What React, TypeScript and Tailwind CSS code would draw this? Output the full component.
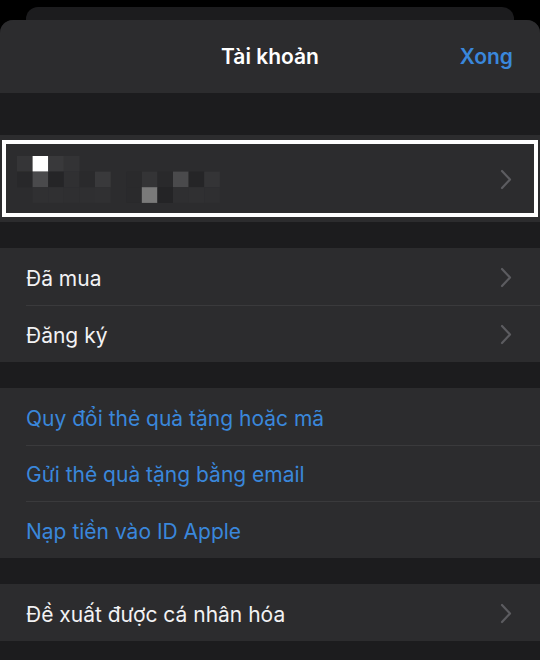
import React from 'react';

const blue = 'text-[#3a87db]';

const Chevron: React.FC = () => (
  <svg width="12" height="21" viewBox="0 0 12 21" className="shrink-0 mt-[2px]">
    <path d="M2 2 L10 10.5 L2 19" fill="none" stroke="#5c5c60" strokeWidth="2.2" strokeLinecap="round" strokeLinejoin="round" />
  </svg>
);

// pixelated (blurred) account name, cells of ~15.5px
const cells: { x: number; y: number; c: string }[] = [
  { x: 0, y: 0, c: '#353537' },
  { x: 1, y: 0, c: '#ffffff' },
  { x: 2, y: 0, c: '#39393b' },
  { x: 3, y: 0, c: '#333335' },
  { x: 0, y: 1, c: '#28282a' },
  { x: 1, y: 1, c: '#4a4a4c' },
  { x: 2, y: 1, c: '#252527' },
  { x: 3, y: 1, c: '#303032' },
  { x: 4, y: 1, c: '#2a2a2c' },
  { x: 5, y: 1, c: '#39393b' },
  { x: 7, y: 1, c: '#2a2a2c' },
  { x: 8, y: 1, c: '#343436' },
  { x: 9, y: 1, c: '#29292b' },
  { x: 10, y: 1, c: '#4a4a4c' },
  { x: 11, y: 1, c: '#252527' },
  { x: 12, y: 1, c: '#343436' },
  { x: 1, y: 2, c: '#303032' },
  { x: 2, y: 2, c: '#303032' },
  { x: 3, y: 2, c: '#2f2f31' },
  { x: 4, y: 2, c: '#2f2f31' },
  { x: 5, y: 2, c: '#303032' },
  { x: 7, y: 2, c: '#2a2a2c' },
  { x: 8, y: 2, c: '#7a7a7a' },
  { x: 9, y: 2, c: '#242426' },
  { x: 10, y: 2, c: '#2f2f31' },
  { x: 11, y: 2, c: '#303032' },
  { x: 12, y: 2, c: '#2f2f31' },
];

const Row: React.FC<{ label: string; link?: boolean; chevron?: boolean; sep?: boolean; h?: string }> = ({
  label,
  link,
  chevron,
  sep,
  h = 'h-[57px]',
}) => (
  <div className={`relative ${h} flex items-center pl-[26px] pr-[28px]`}>
    {sep && <div className="absolute top-0 left-[26px] right-0 h-px bg-[#3a3a3c]" />}
    <span className={`flex-1 pt-[4px] text-[21px] ${link ? blue : 'text-[#f2f2f4]'}`}>{label}</span>
    {chevron && <Chevron />}
  </div>
);

export default function App() {
  return (
    <div className="w-[540px] h-[660px] bg-black overflow-hidden" style={{ fontFamily: 'Inter, "Noto Sans", sans-serif' }}>
      <div className="mt-[7px] mx-[26px] h-[13px] bg-[#1c1c1e] rounded-t-[12px]" />
      <div className="bg-[#1c1c1e] rounded-t-[13px] overflow-hidden h-[640px]">
        <div className="relative h-[73px] bg-[#2c2c2e] flex items-center justify-center">
          <span className="text-[21px] font-semibold text-white">Tài khoản</span>
          <span className={`absolute right-[27px] text-[21px] font-semibold ${blue}`}>Xong</span>
        </div>

        <div className="h-[42px]" />

        <div className="relative h-[87px] bg-[#2c2c2e] flex items-center pl-[17px] pr-[28px]">
          <svg width="210" height="47" viewBox="0 0 210 47" className="shrink-0 mt-[2px]">
            {cells.map((p, i) => (
              <rect key={i} x={p.x * 15.6} y={p.y * 15.6} width="15.7" height="15.7" fill={p.c} />
            ))}
          </svg>
          <div className="flex-1" />
          <Chevron />
          <div className="absolute left-[2px] right-[2px] top-[5px] h-[77px] border-4 border-white" />
        </div>

        <div className="h-[26px]" />

        <div className="bg-[#2c2c2e]">
          <Row label="Đã mua" chevron />
          <Row label="Đăng ký" chevron sep />
        </div>

        <div className="h-[26px]" />

        <div className="bg-[#2c2c2e]">
          <Row label="Quy đổi thẻ quà tặng hoặc mã" link />
          <Row label="Gửi thẻ quà tặng bằng email" link sep h="h-[56px]" />
          <Row label="Nạp tiền vào ID Apple" link sep />
        </div>

        <div className="h-[26px]" />

        <div className="bg-[#2c2c2e]">
          <Row label="Đề xuất được cá nhân hóa" chevron />
        </div>
      </div>
    </div>
  );
}
